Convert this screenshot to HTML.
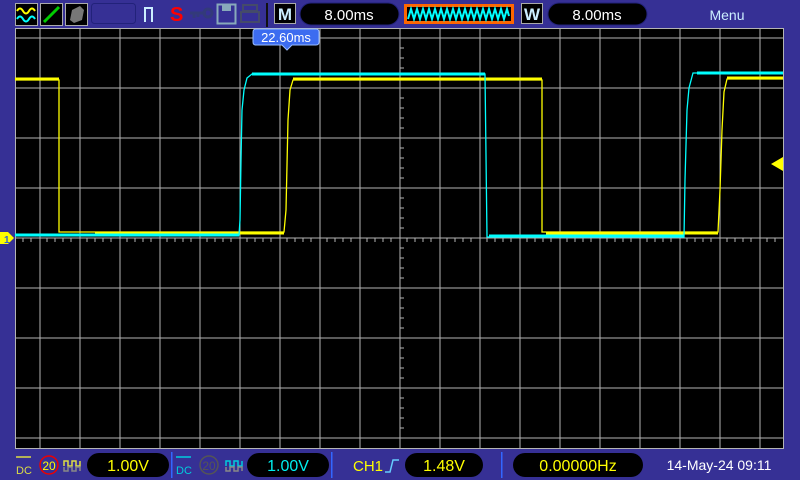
<!DOCTYPE html>
<html><head><meta charset="utf-8"><style>
html,body{margin:0;padding:0;background:#363095;width:800px;height:480px;overflow:hidden;font-family:"Liberation Sans",sans-serif}
svg{position:absolute;left:0;top:0}
</style></head><body>
<svg width="800" height="480" viewBox="0 0 800 480" xmlns="http://www.w3.org/2000/svg">
<rect width="800" height="480" fill="#363095"/>
<!-- top icons -->
<rect x="15.5" y="3.5" width="22" height="22" fill="#000" stroke="#aaa"/>
<path d="M17,11 q3,-5 6,0 t6,0 t6,0" stroke="#ff0" stroke-width="2" fill="none"/>
<path d="M17,19 q3,-5 6,0 t6,0 t6,0" stroke="#0ff" stroke-width="2" fill="none"/>
<rect x="40.5" y="3.5" width="22" height="22" fill="#000" stroke="#aaa"/>
<path d="M44,22 L59,7" stroke="#0c0" stroke-width="3"/>
<rect x="65.5" y="3.5" width="22" height="22" fill="#000" stroke="#aaa"/>
<path d="M70,20 L72,10 L80,6 L84,10 L82,20 L74,23 Z" fill="#777"/>
<rect x="91.5" y="3.5" width="44" height="20" rx="3" fill="#363095" stroke="#22227a"/>
<path d="M145,22 V8 H152 V22" stroke="#cef" stroke-width="2" fill="none"/>
<text x="170" y="21" fill="#f00" font-size="20" font-weight="bold">S</text>
<path d="M190,13 H206 M194,13 V18 M198,13 V17" stroke="#333a7a" stroke-width="3"/>
<circle cx="208" cy="13" r="4" fill="none" stroke="#333a7a" stroke-width="3"/>
<rect x="217.5" y="4.5" width="18" height="19" fill="none" stroke="#8ab" stroke-width="2"/>
<rect x="222" y="5" width="9" height="6" fill="#8ab"/>
<rect x="243" y="5" width="14" height="6" fill="none" stroke="#444a6a" stroke-width="2"/>
<rect x="241" y="12" width="18" height="10" fill="none" stroke="#444a6a" stroke-width="2"/>
<rect x="266" y="3" width="2" height="24" fill="#111"/>
<rect x="274.5" y="3.5" width="21" height="20" fill="#000" stroke="#aaa"/>
<text x="285" y="20" fill="#cef" font-size="17" font-weight="bold" text-anchor="middle">M</text>
<rect x="300" y="3" width="99" height="22" rx="11" fill="#000" stroke="#22227a"/>
<text x="349" y="20" fill="#fff" font-size="15" text-anchor="middle">8.00ms</text>
<rect x="404" y="4" width="110" height="20" fill="#f60"/>
<rect x="407" y="7" width="104" height="14" fill="#000"/>
<path d="M408,19 l3,-10 l3,10 l3,-10 l3,10 l3,-10 l3,10 l3,-10 l3,10 l3,-10 l3,10 l3,-10 l3,10 l3,-10 l3,10 l3,-10 l3,10 l3,-10 l3,10 l3,-10 l3,10 l3,-10 l3,10 l3,-10 l3,10 l3,-10 l3,10 l3,-10 l3,10 l3,-10 l3,10 l3,-10 l3,10 l3,-10 l2,7" stroke="#0ff" stroke-width="2" fill="none"/>
<rect x="521.5" y="3.5" width="21" height="20" fill="#000" stroke="#aaa"/>
<text x="532" y="20" fill="#cef" font-size="17" font-weight="bold" text-anchor="middle">W</text>
<rect x="548" y="3" width="99" height="22" rx="11" fill="#000" stroke="#22227a"/>
<text x="597" y="20" fill="#fff" font-size="15" text-anchor="middle">8.00ms</text>
<text x="727" y="20" fill="#cef" font-size="14" text-anchor="middle">Menu</text>
<!-- grid -->
<rect x="15" y="28" width="769" height="420" fill="#000"/>
<g stroke="#b4b4b4" stroke-width="1" shape-rendering="crispEdges">
<path d="M40,28V448M80,28V448M120,28V448M160,28V448M200,28V448M240,28V448M280,28V448M320,28V448M360,28V448M400,28V448M440,28V448M480,28V448M520,28V448M560,28V448M600,28V448M640,28V448M680,28V448M720,28V448M760,28V448"/>
<path d="M15,38H783M15,88H783M15,138H783M15,188H783M15,238H783M15,288H783M15,338H783M15,388H783M15,438H783"/>
<rect x="15.5" y="28.5" width="768" height="420" fill="none"/>
</g>
<g stroke="#b4b4b4" shape-rendering="crispEdges">
<path d="M23,238v4M31,238v4M47,238v4M55,238v4M63,238v4M71,238v4M87,238v4M95,238v4M103,238v4M111,238v4M127,238v4M135,238v4M143,238v4M151,238v4M167,238v4M175,238v4M183,238v4M191,238v4M207,238v4M215,238v4M223,238v4M231,238v4M247,238v4M255,238v4M263,238v4M271,238v4M287,238v4M295,238v4M303,238v4M311,238v4M327,238v4M335,238v4M343,238v4M351,238v4M367,238v4M375,238v4M383,238v4M391,238v4M407,238v4M415,238v4M423,238v4M431,238v4M447,238v4M455,238v4M463,238v4M471,238v4M487,238v4M495,238v4M503,238v4M511,238v4M527,238v4M535,238v4M543,238v4M551,238v4M567,238v4M575,238v4M583,238v4M591,238v4M607,238v4M615,238v4M623,238v4M631,238v4M647,238v4M655,238v4M663,238v4M671,238v4M687,238v4M695,238v4M703,238v4M711,238v4M727,238v4M735,238v4M743,238v4M751,238v4M767,238v4M775,238v4"/>
<path d="M400,48h4M400,58h4M400,68h4M400,78h4M400,98h4M400,108h4M400,118h4M400,128h4M400,148h4M400,158h4M400,168h4M400,178h4M400,198h4M400,208h4M400,218h4M400,228h4M400,248h4M400,258h4M400,268h4M400,278h4M400,298h4M400,308h4M400,318h4M400,328h4M400,348h4M400,358h4M400,368h4M400,378h4M400,398h4M400,408h4M400,418h4M400,428h4"/>
</g>
<!-- traces -->
<path d="M15,80 H59 V232 H284 L286,210 L288,120 L290,90 L293,80 H542 V232 H718 L720,190 L722,130 L724,92 L727,79 H783" stroke="#ff0" stroke-width="1.3" fill="none"/>
<path d="M15,79 H59 M95,233 H284 M293,79 H542 M546,233 H718 M727,78 H783" stroke="#ff0" stroke-width="3" fill="none"/>
<path d="M15,235 H239 L240,220 L241,160 L242,110 L244,90 L247,78 L252,74 H485 L487,237 H684 L685,180 L687,110 L689,88 L693,73 H783" stroke="#0ff" stroke-width="1.3" fill="none"/>
<path d="M15,235 H239 M252,74 H485 M489,236 H684 M697,73 H783" stroke="#0ff" stroke-width="3" fill="none"/>
<!-- markers -->
<path d="M0,232 H8 L14,238 L8,244 H0 Z" fill="#ff0"/>
<text x="4" y="243" fill="#36c" font-size="10" font-weight="bold">1</text>
<path d="M783,157 L771,164 L783,171 Z" fill="#ff0"/>
<path d="M256,29 H316 Q319,29 319,32 V42 Q319,45 316,45 H292 L287,50 L282,45 H256 Q253,45 253,42 V32 Q253,29 256,29Z" fill="#3c6cf0" stroke="#9bf"/>
<text x="286" y="42" fill="#fff" font-size="13" text-anchor="middle">22.60ms</text>
<!-- bottom bar -->
<path d="M16,457h15" stroke="#dd4" stroke-width="1.5"/>
<text x="16" y="474" fill="#dd4" font-size="11">DC</text>
<circle cx="49" cy="465" r="9" fill="none" stroke="#e00" stroke-width="1.5"/>
<text x="49" y="470" fill="#ff0" font-size="12" text-anchor="middle">20</text>
<path d="M64,466v-5h4v5h4v-5h4v5h4v-5" stroke="#dd4" stroke-width="1.5" fill="none"/>
<path d="M64,467v4h4v-4h4v4h4v-4h4v4" stroke="#888" stroke-width="1.5" fill="none"/>
<rect x="87" y="453" width="82" height="24" rx="12" fill="#000"/>
<text x="128" y="471" fill="#ff0" font-size="16" text-anchor="middle">1.00V</text>
<rect x="171" y="452" width="1.5" height="26" fill="#36f"/>
<path d="M176,457h15" stroke="#0cd" stroke-width="1.5"/>
<text x="176" y="474" fill="#0cd" font-size="11">DC</text>
<circle cx="209" cy="465" r="9" fill="none" stroke="#555" stroke-width="1.5"/>
<text x="209" y="470" fill="#555" font-size="12" text-anchor="middle">20</text>
<path d="M226,466v-5h4v5h4v-5h4v5h4v-5" stroke="#0cd" stroke-width="1.5" fill="none"/>
<path d="M226,467v4h4v-4h4v4h4v-4h4v4" stroke="#888" stroke-width="1.5" fill="none"/>
<rect x="247" y="453" width="82" height="24" rx="12" fill="#000"/>
<text x="288" y="471" fill="#0ee" font-size="16" text-anchor="middle">1.00V</text>
<rect x="331" y="452" width="1.5" height="26" fill="#36f"/>
<text x="353" y="471" fill="#ff0" font-size="15">CH1</text>
<path d="M385,472h5l3,-12h6" stroke="#6cf" stroke-width="1.5" fill="none"/>
<rect x="405" y="453" width="78" height="24" rx="12" fill="#000"/>
<text x="444" y="471" fill="#ff0" font-size="16" text-anchor="middle">1.48V</text>
<rect x="501" y="452" width="1.5" height="26" fill="#36f"/>
<rect x="513" y="453" width="130" height="24" rx="12" fill="#000"/>
<text x="578" y="471" fill="#ff0" font-size="16" text-anchor="middle">0.00000Hz</text>
<text x="719" y="470" fill="#fff" font-size="14" text-anchor="middle">14-May-24 09:11</text>
</svg>
</body></html>
